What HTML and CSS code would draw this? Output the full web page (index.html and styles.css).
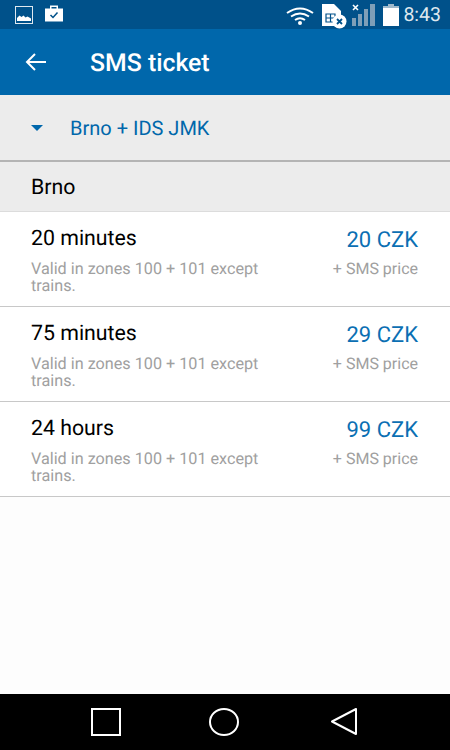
FILE: index.html
```html
<!DOCTYPE html>
<html lang="en">
<head>
<meta charset="utf-8">
<title>SMS ticket</title>
<link rel="stylesheet" href="styles.css">
</head>
<body>
<div class="screen">
  <header class="status">
    <div class="status-left">
      <svg class="ic-photo" viewBox="0 0 18 18"><rect x="0.5" y="0.5" width="17" height="17" fill="none" stroke="#dfe8ef"/><path d="M2 15v-3l2.500-2.500 2 1.500 2-1.500 2 2 2-1 3.500 2V15z" fill="#fff"/></svg>
      <svg class="ic-case" viewBox="0 0 18 18"><path d="M5 4V0.500h8V4h-1.500V2H6.500V4z" fill="#fff"/><path d="M0 3.500h18v13H0z" fill="#fff"/><path d="M5.500 10l2.500 2.500 4.500-5" fill="none" stroke="#00518a" stroke-width="1.500"/></svg>
    </div>
    <div class="status-right">
      <svg class="ic-wifi" viewBox="0 0 28 20"><g fill="none" stroke="#fff" stroke-width="2"><path d="M1 7q13-9 26 0"/><path d="M5 10.500q9-6 18 0"/><path d="M9 14q5-3.500 10 0"/></g><circle cx="14" cy="17" r="2" fill="#fff"/></svg>
      <svg class="ic-sim" viewBox="0 0 26 26"><path d="M1 1h12l7 7v15H1z" fill="#fff"/><path d="M5 11h9v8H5zM5 15h9M9.500 11v8" fill="none" stroke="#00518a" stroke-width="1.200"/><circle cx="18.500" cy="18.500" r="7" fill="#fff"/><path d="M16 16l5 5M21 16l-5 5" stroke="#00518a" stroke-width="1.800"/></svg>
      <svg class="ic-signal" viewBox="0 0 26 22"><path d="M2 1l5 5M7 1l-5 5" stroke="#fff" stroke-width="1.600"/><g fill="#7f9fb8"><path d="M1 14h4v8H1zM7 10h4v12H7zM13 5h4v17h-4zM19 0h5v22h-5z"/></g></svg>
      <svg class="ic-batt" viewBox="0 0 16 22"><path d="M5 0h6v2H5z" fill="#9fb9cc"/><path d="M0 2h16v2H0z" fill="#9fb9cc"/><path d="M0 4h16v18H0z" fill="#fff"/></svg>
      <span class="clock">8:43</span>
    </div>
  </header>
  <div class="appbar">
    <svg class="ic-back" viewBox="0 0 22 18"><path d="M21 9H2M10 1L2 9l8 8" fill="none" stroke="#fff" stroke-width="2"/></svg>
    <h1 class="title">SMS ticket</h1>
  </div>
  <div class="picker">
    <span class="caret"></span>
    <span class="picker-text">Brno + IDS JMK</span>
  </div>
  <div class="group">Brno</div>
  <main class="list">
    <div class="row">
      <div class="row-main"><div class="name">20 minutes</div><div class="desc">Valid in zones 100 + 101 except trains.</div></div>
      <div class="row-side"><div class="price">20 CZK</div><div class="extra">+ SMS price</div></div>
    </div>
    <div class="row">
      <div class="row-main"><div class="name">75 minutes</div><div class="desc">Valid in zones 100 + 101 except trains.</div></div>
      <div class="row-side"><div class="price">29 CZK</div><div class="extra">+ SMS price</div></div>
    </div>
    <div class="row">
      <div class="row-main"><div class="name">24 hours</div><div class="desc">Valid in zones 100 + 101 except trains.</div></div>
      <div class="row-side"><div class="price">99 CZK</div><div class="extra">+ SMS price</div></div>
    </div>
  </main>
  <nav class="nav">
    <svg class="ic-square" viewBox="0 0 32 30"><rect x="1" y="1" width="28" height="26" fill="none" stroke="#fff" stroke-width="2"/></svg>
    <svg class="ic-circle" viewBox="0 0 32 30"><ellipse cx="15" cy="14" rx="14" ry="13" fill="none" stroke="#fff" stroke-width="2"/></svg>
    <svg class="ic-tri" viewBox="0 0 28 30"><path d="M26 1v25L2 13.500z" fill="none" stroke="#fff" stroke-width="2" stroke-linejoin="round"/></svg>
  </nav>
</div>
</body>
</html>
```
FILE: styles.css
```css
* { box-sizing: border-box; }
html, body { margin: 0; padding: 0; }
body { width: 450px; height: 750px; overflow: hidden; font-family: Roboto, "Liberation Sans", sans-serif; text-rendering: geometricPrecision; }
.screen { width: 450px; height: 750px; display: flex; flex-direction: column; background: #fdfdfd; }
.status { height: 29px; background: #00518a; display: flex; justify-content: space-between; align-items: center; padding: 0 9px 0 15px; }
.status-left { display: flex; align-items: center; gap: 12px; }
.ic-photo { width: 18px; height: 18px; display: block; }
.ic-case { width: 18px; height: 18px; display: block; margin-top: -1px; }
.status-right { display: flex; align-items: center; }
.ic-wifi { width: 28px; height: 20px; display: block; margin: 2px 7px 0 0; }
.ic-sim { width: 26px; height: 26px; display: block; margin: 3px 4px 0 0; }
.ic-signal { width: 26px; height: 22px; display: block; margin: 0 6px 0 0; }
.ic-batt { width: 16px; height: 22px; display: block; margin: 0 4px 0 0; }
.clock { color: #dfe8ef; font-size: 19.500px; }
.appbar { height: 66px; background: #0067ab; display: flex; align-items: center; padding: 0 0 0 25px; }
.ic-back { width: 22px; height: 18px; display: block; margin-right: 43px; }
.title { margin: 2px 0 0; color: #fff; font-size: 24.800px; font-weight: 500; }
.picker { height: 67px; background: #ececec; display: flex; align-items: center; padding-left: 31px; border-bottom: 2px solid #b4b4b4; }
.caret { width: 0; height: 0; border-left: 6.500px solid transparent; border-right: 6.500px solid transparent; border-top: 6px solid #0067ab; margin-right: 27px; }
.picker-text { color: #0067ab; font-size: 20px; margin-top: 1px; }
.group { height: 50px; background: #ececec; border-bottom: 1px solid #dcdcdc; display: flex; align-items: center; padding: 2px 0 0 31px; font-size: 21.300px; color: #000; }
.list { flex: 1; }
.row { height: 95px; background: #fff; border-bottom: 1px solid #c8c8c8; display: flex; justify-content: space-between; padding: 14px 32px 0 31px; }
.row-main { width: 240px; }
.name { font-size: 21.300px; line-height: 26px; color: #000; }
.desc { margin-top: 8px; font-size: 16.200px; line-height: 17px; color: #a0a0a0; }
.row-side { text-align: right; }
.price { font-size: 22px; line-height: 28px; color: #0b6fb3; margin-top: 1px; }
.extra { margin-top: 5px; font-size: 16px; line-height: 17px; color: #a0a0a0; }
.nav { height: 56px; background: #000; display: flex; align-items: center; padding: 2px 0 0 91px; }
.ic-square { width: 32px; height: 30px; display: block; margin-right: 86px; }
.ic-circle { width: 32px; height: 30px; display: block; margin-right: 89px; }
.ic-tri { width: 28px; height: 30px; display: block; }
```
